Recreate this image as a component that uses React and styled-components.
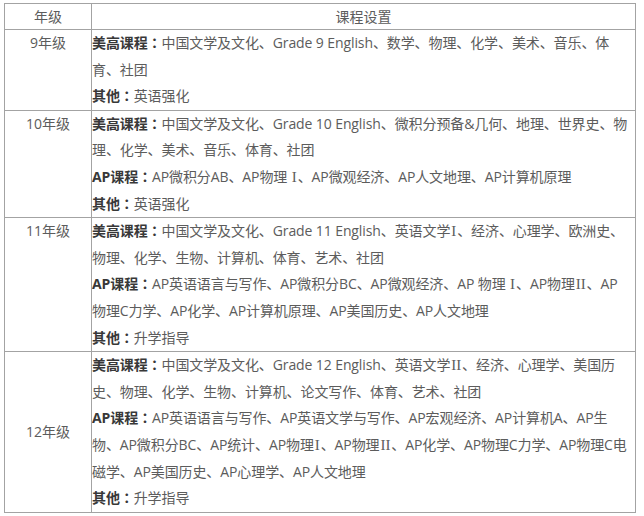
import React from "react";
import styled, { createGlobalStyle } from "styled-components";

const GlobalStyle = createGlobalStyle`
  html, body {
    margin: 0;
    padding: 0;
    background: #fff;
  }
  body {
    font-family: "Open Sans", "Noto Sans CJK SC", sans-serif;
  }
`;

// "Ⅰ" / "Ⅱ" in text are drawn as serif roman numerals
const rows = [
  {
    grade: "9年级",
    middle: false,
    lines: [
      ["美高课程", "中国文学及文化、Grade 9 English、数学、物理、化学、美术、音乐、体"],
      [null, "育、社团"],
      ["其他", "英语强化"],
    ],
  },
  {
    grade: "10年级",
    middle: false,
    lines: [
      ["美高课程", "中国文学及文化、Grade 10 English、微积分预备&几何、地理、世界史、物"],
      [null, "理、化学、美术、音乐、体育、社团"],
      ["AP课程", "AP微积分AB、AP物理 Ⅰ、AP微观经济、AP人文地理、AP计算机原理"],
      ["其他", "英语强化"],
    ],
  },
  {
    grade: "11年级",
    middle: false,
    lines: [
      ["美高课程", "中国文学及文化、Grade 11 English、英语文学Ⅰ、经济、心理学、欧洲史、"],
      [null, "物理、化学、生物、计算机、体育、艺术、社团"],
      ["AP课程", "AP英语语言与写作、AP微积分BC、AP微观经济、AP 物理 Ⅰ、AP物理Ⅱ、AP"],
      [null, "物理C力学、AP化学、AP计算机原理、AP美国历史、AP人文地理"],
      ["其他", "升学指导"],
    ],
  },
  {
    grade: "12年级",
    middle: true,
    lines: [
      ["美高课程", "中国文学及文化、Grade 12 English、英语文学Ⅱ、经济、心理学、美国历"],
      [null, "史、物理、化学、生物、计算机、论文写作、体育、艺术、社团"],
      ["AP课程", "AP英语语言与写作、AP英语文学与写作、AP宏观经济、AP计算机A、AP生"],
      [null, "物、AP微积分BC、AP统计、AP物理Ⅰ、AP物理Ⅱ、AP化学、AP物理C力学、AP物理C电"],
      [null, "磁学、AP美国历史、AP心理学、AP人文地理"],
      ["其他", "升学指导"],
    ],
  },
];

const Page = styled.div`
  padding: 3px 0 0 4px;
`;

const Table = styled.table`
  width: 632px;
  border-collapse: collapse;
  table-layout: fixed;
  font-size: 14px;
  color: #5c5c5c;
`;

const HeadCell = styled.th`
  height: 25px;
  padding: 0;
  border: 1px solid #a3a3a3;
  font-weight: normal;
  text-align: center;
  vertical-align: middle;
  line-height: 25px;
  width: ${(p) => (p.$narrow ? "86px" : "auto")};
`;

const GradeCell = styled.td`
  padding: 0;
  border: 1px solid #a3a3a3;
  text-align: center;
  vertical-align: ${(p) => (p.$middle ? "middle" : "top")};
  line-height: 26.6px;
`;

const CourseCell = styled.td`
  padding: 0;
  border: 1px solid #a3a3a3;
  vertical-align: top;
  overflow: hidden;
`;

const Line = styled.div`
  height: 26.6px;
  line-height: 26.6px;
  white-space: nowrap;
  letter-spacing: -0.1px;
`;

const Label = styled.b`
  color: #383838;
  font-weight: bold;
`;

const Colon = styled.span`
  font-family: "Noto Sans CJK TC", sans-serif;
  line-height: 1;
`;

const Roman = styled.span`
  font-family: "Liberation Serif", serif;
  font-size: 15px;
  line-height: 1;
  margin: 0 1px;
`;

function withNumerals(text) {
  return text.split(/(Ⅰ|Ⅱ)/).map((part, i) =>
    part === "Ⅰ" ? (
      <Roman key={i}>I</Roman>
    ) : part === "Ⅱ" ? (
      <Roman key={i}>II</Roman>
    ) : (
      part
    )
  );
}

export default function App() {
  return (
    <Page>
      <GlobalStyle />
      <Table>
        <thead>
          <tr>
            <HeadCell $narrow>年级</HeadCell>
            <HeadCell>课程设置</HeadCell>
          </tr>
        </thead>
        <tbody>
          {rows.map((row) => (
            <tr key={row.grade}>
              <GradeCell $middle={row.middle}>{row.grade}</GradeCell>
              <CourseCell>
                {row.lines.map(([label, text], i) => (
                  <Line key={i}>
                    {label && (
                      <Label>
                        {label}
                        <Colon>：</Colon>
                      </Label>
                    )}
                    {withNumerals(text)}
                  </Line>
                ))}
              </CourseCell>
            </tr>
          ))}
        </tbody>
      </Table>
    </Page>
  );
}
